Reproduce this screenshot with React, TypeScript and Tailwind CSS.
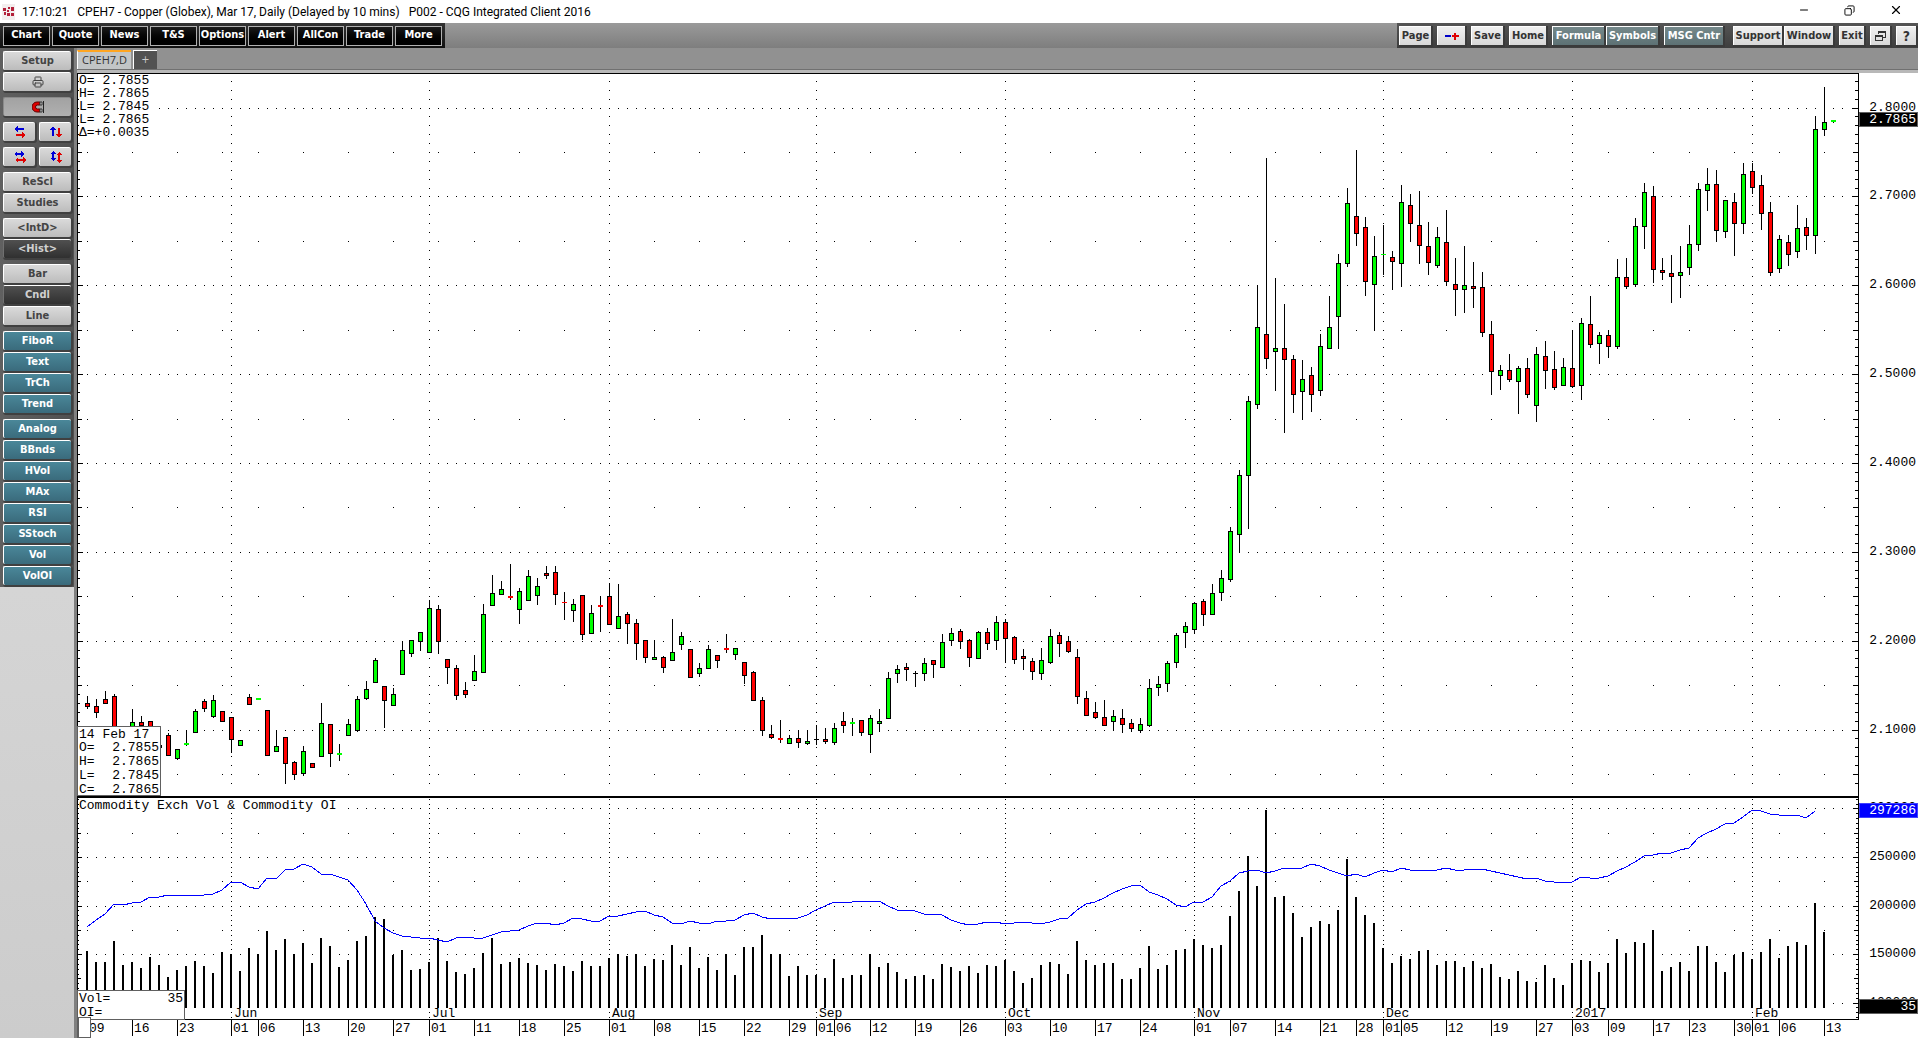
import type { ReactNode } from 'react';
import { Printer, Minus, X, Copy } from 'lucide-react';

type Kind = 'g' | 'r' | 'k';

// high, body top, body bottom, low, colour - vertical chart positions, one row per session
const CANDLES: [number, number, number, number, Kind][] = [
  [696, 703, 706, 708, 'r'], [699, 706, 712, 717, 'r'], [691, 699, 703, 703, 'r'], [694, 696, 730, 735, 'r'],
  [728, 732, 740, 745, 'r'], [709, 722, 735, 740, 'g'], [716, 722, 725, 740, 'r'], [721, 721, 735, 740, 'r'],
  [740, 745, 747, 750, 'r'], [733, 735, 755, 755, 'r'], [749, 749, 758, 759, 'g'], [730, 743, 744, 745, 'g'],
  [709, 711, 732, 732, 'g'], [699, 701, 708, 711, 'r'], [695, 700, 716, 717, 'g'], [711, 711, 721, 721, 'r'],
  [717, 717, 739, 752, 'r'], [740, 740, 745, 745, 'g'], [694, 697, 704, 704, 'r'], [698, 698, 699, 699, 'g'],
  [710, 710, 755, 755, 'r'], [730, 746, 751, 751, 'g'], [737, 737, 763, 783, 'r'], [761, 762, 774, 779, 'r'],
  [746, 751, 773, 775, 'g'], [763, 763, 767, 767, 'r'], [703, 723, 756, 756, 'g'], [724, 724, 753, 766, 'r'],
  [744, 753, 754, 760, 'g'], [719, 724, 735, 735, 'g'], [696, 699, 730, 731, 'g'], [681, 689, 698, 699, 'g'],
  [658, 660, 682, 682, 'g'], [686, 686, 700, 727, 'r'], [688, 694, 705, 705, 'g'], [641, 650, 674, 674, 'g'],
  [640, 640, 653, 656, 'g'], [632, 632, 641, 650, 'g'], [600, 608, 652, 652, 'g'], [605, 609, 641, 653, 'r'],
  [659, 659, 667, 683, 'r'], [665, 668, 695, 699, 'r'], [682, 690, 694, 697, 'r'], [655, 671, 680, 680, 'g'],
  [604, 614, 672, 672, 'g'], [575, 593, 605, 605, 'g'], [581, 589, 594, 594, 'g'], [564, 596, 597, 599, 'r'],
  [588, 591, 609, 623, 'g'], [570, 576, 600, 600, 'g'], [578, 586, 595, 604, 'g'], [566, 573, 575, 578, 'r'],
  [566, 572, 594, 604, 'r'], [592, 602, 602, 619, 'r'], [599, 604, 610, 621, 'g'], [595, 595, 634, 639, 'r'],
  [605, 613, 633, 633, 'g'], [596, 605, 606, 631, 'r'], [583, 596, 624, 624, 'r'], [584, 616, 628, 628, 'g'],
  [612, 614, 623, 643, 'r'], [619, 623, 643, 659, 'r'], [640, 640, 657, 662, 'r'], [640, 657, 659, 659, 'g'],
  [656, 657, 667, 672, 'r'], [619, 652, 660, 660, 'g'], [632, 636, 644, 649, 'g'], [649, 649, 677, 677, 'r'],
  [663, 668, 673, 676, 'g'], [645, 649, 668, 668, 'g'], [655, 655, 660, 667, 'r'], [634, 648, 649, 652, 'r'],
  [648, 648, 654, 659, 'g'], [662, 662, 675, 683, 'r'], [671, 672, 700, 700, 'r'], [697, 700, 730, 735, 'r'],
  [725, 734, 737, 738, 'r'], [720, 738, 739, 742, 'r'], [735, 738, 743, 743, 'g'], [730, 738, 742, 747, 'r'],
  [730, 741, 743, 744, 'g'], [725, 739, 739, 744, 'k'], [728, 739, 741, 743, 'r'], [723, 728, 742, 744, 'g'],
  [712, 721, 725, 732, 'r'], [718, 722, 723, 735, 'g'], [720, 720, 732, 735, 'r'], [715, 718, 734, 752, 'g'],
  [709, 721, 723, 731, 'g'], [672, 678, 718, 718, 'g'], [665, 669, 673, 682, 'g'], [663, 667, 669, 680, 'r'],
  [671, 673, 673, 686, 'k'], [658, 663, 673, 680, 'g'], [660, 660, 664, 677, 'r'], [634, 642, 667, 667, 'g'],
  [628, 633, 640, 645, 'g'], [629, 631, 641, 648, 'r'], [639, 640, 657, 666, 'r'], [631, 632, 658, 658, 'g'],
  [628, 632, 643, 649, 'r'], [616, 622, 640, 649, 'g'], [619, 622, 638, 662, 'r'], [636, 637, 659, 663, 'r'],
  [649, 656, 658, 669, 'r'], [658, 661, 671, 679, 'r'], [648, 660, 673, 679, 'g'], [629, 636, 662, 663, 'g'],
  [632, 635, 643, 656, 'r'], [636, 641, 651, 652, 'r'], [649, 657, 696, 703, 'r'], [691, 698, 715, 715, 'r'],
  [702, 712, 717, 718, 'r'], [700, 717, 725, 725, 'r'], [710, 716, 721, 730, 'g'], [709, 718, 724, 732, 'r'],
  [719, 723, 728, 731, 'r'], [718, 724, 730, 732, 'g'], [679, 688, 725, 726, 'g'], [676, 684, 687, 695, 'g'],
  [661, 663, 683, 691, 'g'], [633, 635, 662, 667, 'g'], [622, 626, 632, 647, 'g'], [602, 603, 629, 633, 'g'],
  [599, 601, 614, 625, 'r'], [584, 593, 614, 614, 'g'], [570, 578, 592, 600, 'g'], [527, 531, 579, 581, 'g'],
  [470, 475, 534, 552, 'g'], [396, 401, 475, 528, 'g'], [286, 327, 404, 408, 'g'], [158, 334, 358, 368, 'r'],
  [278, 348, 351, 390, 'g'], [304, 348, 359, 432, 'r'], [355, 359, 394, 412, 'r'], [360, 379, 391, 419, 'g'],
  [367, 375, 394, 411, 'r'], [334, 346, 390, 395, 'g'], [296, 327, 348, 348, 'g'], [254, 263, 316, 348, 'g'],
  [188, 203, 263, 266, 'g'], [150, 216, 233, 245, 'r'], [217, 227, 281, 295, 'r'], [236, 256, 284, 330, 'g'],
  [225, 254, 254, 274, 'g'], [251, 257, 261, 289, 'r'], [185, 202, 263, 286, 'g'], [194, 205, 223, 241, 'r'],
  [191, 225, 245, 263, 'r'], [222, 246, 262, 274, 'r'], [227, 237, 265, 267, 'g'], [210, 242, 281, 284, 'r'],
  [258, 284, 289, 315, 'r'], [246, 285, 289, 312, 'g'], [262, 286, 288, 307, 'r'], [272, 287, 332, 336, 'r'],
  [321, 334, 371, 394, 'r'], [365, 370, 375, 389, 'g'], [354, 370, 379, 381, 'r'], [366, 368, 381, 413, 'g'],
  [358, 368, 394, 397, 'r'], [347, 354, 405, 421, 'g'], [341, 356, 370, 388, 'r'], [351, 369, 387, 389, 'r'],
  [358, 367, 385, 385, 'g'], [330, 368, 386, 387, 'r'], [318, 323, 385, 399, 'g'], [296, 324, 344, 347, 'r'],
  [332, 335, 343, 363, 'g'], [330, 335, 346, 357, 'r'], [259, 277, 346, 348, 'g'], [258, 277, 286, 288, 'r'],
  [218, 226, 284, 286, 'g'], [183, 192, 226, 248, 'g'], [186, 196, 269, 282, 'r'], [258, 270, 272, 279, 'r'],
  [255, 273, 276, 302, 'r'], [246, 272, 275, 297, 'g'], [225, 244, 267, 274, 'g'], [183, 189, 244, 250, 'g'],
  [168, 184, 190, 210, 'g'], [170, 184, 230, 241, 'r'], [200, 200, 231, 237, 'g'], [193, 202, 223, 255, 'r'],
  [163, 174, 223, 233, 'g'], [163, 171, 187, 193, 'r'], [175, 185, 213, 229, 'r'], [202, 212, 272, 275, 'r'],
  [235, 239, 268, 272, 'g'], [235, 242, 254, 265, 'r'], [205, 228, 251, 257, 'g'], [218, 227, 235, 249, 'r'],
  [116, 129, 235, 253, 'g'], [87, 122, 129, 135, 'g'], [120, 120, 121, 122, 'g'],
];

// volume and open interest, in thirds of a unit below the top of the lower pane
const VOLUME = [
  513, 546, 546, 483, 555, 546, 564, 531, 555, 591, 570, 558, 543, 558, 579, 516, 522, 573, 504, 522, 453, 510, 477,
  522, 489, 549, 474, 498, 561, 540, 483, 468, 411, 417, 525, 510, 570, 567, 546, 474, 543, 576, 582, 564, 519, 474,
  552, 546, 534, 549, 555, 570, 552, 558, 573, 543, 558, 558, 534, 522, 528, 522, 558, 537, 540, 495, 555, 501, 564,
  531, 570, 522, 585, 501, 501, 465, 522, 522, 588, 558, 585, 585, 594, 537, 594, 585, 585, 522, 561, 549, 576, 597,
  588, 585, 597, 552, 561, 573, 558, 579, 555, 558, 540, 573, 609, 594, 555, 546, 552, 582, 483, 540, 555, 549, 549,
  597, 597, 564, 498, 567, 555, 510, 507, 477, 495, 504, 495, 408, 333, 228, 318, 90, 351, 348, 399, 471, 441, 423,
  432, 390, 237, 351, 405, 429, 504, 549, 528, 537, 513, 510, 555, 543, 543, 561, 543, 564, 552, 591, 597, 573, 603,
  606, 555, 594, 615, 549, 540, 543, 576, 549, 477, 519, 486, 489, 450, 573, 561, 546, 573, 498, 498, 546, 576, 525,
  516, 537, 516, 477, 534, 498, 486, 495, 369, 456,
];

const OPEN_INTEREST = [
  440, 421, 402, 371, 376, 370, 367, 352, 352, 346, 346, 346, 346, 346, 343, 330, 307, 307, 321, 328, 295, 298, 271,
  267, 253, 262, 283, 283, 292, 301, 330, 372, 424, 445, 459, 469, 472, 475, 475, 481, 487, 475, 471, 475, 475, 466,
  457, 454, 451, 439, 430, 430, 436, 430, 414, 418, 424, 424, 409, 409, 403, 397, 394, 406, 412, 429, 433, 424, 430,
  433, 424, 424, 421, 404, 400, 412, 418, 415, 418, 415, 406, 391, 379, 367, 367, 367, 364, 367, 364, 377, 391, 391,
  394, 403, 403, 406, 419, 428, 436, 433, 427, 427, 433, 430, 427, 430, 433, 425, 418, 415, 391, 371, 367, 355, 338,
  328, 319, 314, 337, 344, 357, 375, 382, 367, 367, 350, 318, 304, 278, 274, 271, 280, 274, 265, 268, 265, 253, 257,
  269, 280, 289, 283, 290, 278, 271, 277, 265, 271, 271, 271, 271, 265, 271, 271, 268, 268, 273, 280, 286, 292, 298,
  295, 304, 307, 307, 307, 291, 295, 295, 289, 272, 262, 245, 227, 226, 220, 220, 209, 205, 174, 160, 146, 133, 129,
  110, 91, 94, 103, 106, 109, 106, 115, 94,
];

const MONTHS: [number, string][] = [
  [16, 'Jun'], [38, 'Jul'], [58, 'Aug'], [81, 'Sep'], [102, 'Oct'], [123, 'Nov'], [144, 'Dec'], [165, '2017'], [185, 'Feb'],
];

const DAYS: [number, string][] = [
  [0, '09'], [5, '16'], [10, '23'], [16, '01'], [19, '06'], [24, '13'], [29, '20'], [34, '27'], [38, '01'], [43, '11'],
  [48, '18'], [53, '25'], [58, '01'], [63, '08'], [68, '15'], [73, '22'], [78, '29'], [81, '01'], [83, '06'], [87, '12'],
  [92, '19'], [97, '26'], [102, '03'], [107, '10'], [112, '17'], [117, '24'], [123, '01'], [127, '07'], [132, '14'],
  [137, '21'], [141, '28'], [144, '01'], [146, '05'], [151, '12'], [156, '19'], [161, '27'], [165, '03'], [169, '09'],
  [174, '17'], [178, '23'], [183, '30'], [185, '01'], [188, '06'], [193, '13'],
];

// first session of each week
const WEEKS = [
  0, 5, 10, 15, 19, 24, 29, 34, 39, 43, 48, 53, 58, 63, 68, 73, 78, 83, 87, 92, 97, 102, 107, 112, 117, 122, 127, 132,
  137, 141, 146, 151, 156, 161, 165, 169, 174, 178, 183, 188, 193,
];

const LEFT = 77;
const RIGHT = 1858;
const TOP = 73;
const SPLIT = 796;
const BOTTOM = 1019;
const PANE = 780;
const COLORS = { g: '#00ff00', r: '#ff0000', k: '#000000' };

const xAt = (i: number) => 87 + i * 9;
const priceY = (step: number) => Math.floor(81.4 + step * 8.885);
const volumeY = (step: number) => Math.round(808.4 + step * 4.856);
const range = (from: number, to: number) => Array.from({ length: to - from + 1 }, (_, i) => from + i);

// step 3 is 2.8000, every tenth step is a labelled price
const PRICE_STEPS = range(0, 79);
const VOLUME_STEPS = range(-2, 43);

const Label = ({ x, y, end, color, children }: { x: number; y: number; end?: boolean; color?: string; children: ReactNode }) => (
  <text x={x} y={y} textAnchor={end ? 'end' : 'start'} fill={color || '#000'} xmlSpace="preserve">
    {children}
  </text>
);

const Dot = ({ x, y }: { x: number; y: number }) => <rect x={x} y={y} width={1} height={1} fill="#000" />;

function Candle({ index }: { index: number }) {
  const [high, top, bottom, low, kind] = CANDLES[index];
  const x = xAt(index);
  const doji = bottom - top < 2;
  return (
    <g>
      <rect x={x} y={high} width={1} height={low - high + 1} fill="#000" />
      <rect x={x - 2} y={top} width={5} height={bottom - top + 1} fill={doji ? COLORS[kind] : '#000'} />
      {!doji && <rect x={x - 1} y={top + 1} width={3} height={bottom - top - 1} fill={COLORS[kind]} />}
    </g>
  );
}

function Ticks({ y, size }: { y: number; size: number }) {
  return (
    <g fill="#000">
      <rect x={LEFT} y={y} width={size} height={1} />
      <rect x={RIGHT - size} y={y} width={size} height={1} />
    </g>
  );
}

function Chart() {
  const sessions = range(0, 195);
  const oiPoints = OPEN_INTEREST.map((v, i) => `${xAt(i)},${Math.round(PANE + v / 3)}`).join(' ');

  return (
    <svg
      viewBox="77 73 1841 965"
      className="block w-full bg-white font-['Liberation_Mono',monospace] text-[13px]"
      shapeRendering="crispEdges"
      role="img"
      aria-label="CPEH7 daily candles with volume and open interest"
    >
      {/* grid */}
      {PRICE_STEPS.map((s) => {
        const y = priceY(s);
        const major = s % 10 === 3;
        const half = s % 10 === 8;
        return (
          <g key={s}>
            <Ticks y={y} size={major ? 6 : half ? 5 : 3} />
            {major && sessions.map((i) => <Dot key={i} x={xAt(i)} y={y} />)}
            {half && WEEKS.map((i) => <Dot key={i} x={xAt(i)} y={y} />)}
            {MONTHS.map(([i]) => <Dot key={i} x={xAt(i)} y={y} />)}
          </g>
        );
      })}
      {VOLUME_STEPS.map((s) => {
        const y = volumeY(s);
        const major = s % 10 === 0;
        const half = s % 5 === 0 && !major;
        return (
          <g key={s}>
            <Ticks y={y} size={major ? 5 : half ? 4 : 2} />
            {major && sessions.map((i) => <Dot key={i} x={xAt(i)} y={y} />)}
            {half && WEEKS.map((i) => <Dot key={i} x={xAt(i)} y={y} />)}
            {MONTHS.map(([i]) => <Dot key={i} x={xAt(i)} y={y} />)}
          </g>
        );
      })}

      {/* series */}
      {CANDLES.map((_, i) => <Candle key={i} index={i} />)}
      {VOLUME.map((v, i) => (
        <rect key={i} x={xAt(i) - 1} y={PANE + v / 3} width={2} height={228 - v / 3} fill="#000" />
      ))}
      <polyline points={oiPoints} fill="none" stroke="#0000ff" strokeWidth={1} />

      {/* frame */}
      <rect x={LEFT} y={TOP} width={1782} height={1} />
      <rect x={LEFT} y={TOP} width={1} height={946} />
      <rect x={RIGHT} y={TOP} width={1} height={946} />
      <rect x={LEFT} y={SPLIT} width={1782} height={2} />
      <rect x={LEFT} y={BOTTOM} width={1782} height={1} />

      {/* time axis */}
      {MONTHS.map(([i, name]) => (
        <g key={i}>
          <rect x={xAt(i) + 2} y={1008} width={name.length * 8} height={11} fill="#fff" />
          <Label x={xAt(i) + 3} y={1017}>{name}</Label>
        </g>
      ))}
      {DAYS.map(([i, day]) => (
        <g key={i}>
          <rect x={xAt(i) - (i === 0 ? 9 : 0)} y={BOTTOM} width={1} height={17} />
          <Label x={xAt(i) + 2} y={1032}>{day}</Label>
        </g>
      ))}

      {/* price axis */}
      {range(0, 7).map((n) => (
        <Label key={n} x={1916} y={priceY(3 + n * 10) + 3} end>{(2.8 - n / 10).toFixed(4)}</Label>
      ))}
      {[300000, 250000, 200000, 150000, 100000].map((v, n) => (
        <Label key={v} x={1916} y={volumeY(n * 10) + 3} end>{v}</Label>
      ))}
      <rect x={1859} y={112} width={59} height={15} fill="#606060" />
      <rect x={1860} y={113} width={57} height={13} fill="#000" />
      <Label x={1916} y={123} end color="#fff">2.7865</Label>
      <rect x={1859} y={803} width={59} height={15} fill="#4040ff" />
      <rect x={1860} y={804} width={57} height={13} fill="#0000ff" />
      <Label x={1916} y={814} end color="#fff">297286</Label>
      <rect x={1859} y={999} width={59} height={15} fill="#606060" />
      <rect x={1860} y={1000} width={57} height={13} fill="#000" />
      <Label x={1916} y={1010} end color="#fff">35</Label>

      {/* last quote */}
      <rect x={79} y={74} width={76} height={64} fill="#fff" />
      {['O= 2.7855', 'H= 2.7865', 'L= 2.7845', 'L= 2.7865', 'Δ=+0.0035'].map((t, n) => (
        <Label key={n} x={79} y={84 + n * 13}>{t}</Label>
      ))}
      <rect x={79} y={799} width={266} height={13} fill="#fff" />
      <Label x={79} y={809}>Commodity Exch Vol &amp; Commodity OI</Label>

      {/* cursor boxes */}
      <rect x={77} y={726} width={84} height={70} fill="#606060" />
      <rect x={78} y={727} width={82} height={68} fill="#fff" />
      <Label x={79} y={738}>14 Feb 17</Label>
      {[['O=', '2.7855'], ['H=', '2.7865'], ['L=', '2.7845'], ['C=', '2.7865']].map(([k, v], n) => (
        <g key={k}>
          <Label x={79} y={751 + n * 14}>{k}</Label>
          <Label x={159} y={751 + n * 14} end>{v}</Label>
        </g>
      ))}
      <rect x={77} y={990} width={108} height={30} fill="#606060" />
      <rect x={78} y={991} width={106} height={28} fill="#fff" />
      <Label x={79} y={1002}>Vol=</Label>
      <Label x={183} y={1002} end>35</Label>
      <Label x={79} y={1016}>OI=</Label>
      <rect x={77} y={1017} width={14} height={21} fill="#606060" />
      <rect x={79} y={1018} width={11} height={19} fill="#fff" />
    </svg>
  );
}

const ArrowsIcon = ({ vertical, double }: { vertical?: boolean; double?: boolean }) => (
  <svg width="12" height="12" viewBox="0 0 12 12" shapeRendering="crispEdges">
    <g transform={vertical ? 'matrix(0 1 1 0 0 0)' : undefined}>
      <path d={double ? 'M0 3l3-3v2h4V0l3 3-3 3V4H3v2z' : 'M0 3l4-3v2h6v2H4v2z'} fill="#0000d8" />
      <path d={double ? 'M1 9l3-3v2h5V6l3 3-3 3v-2H4v2z' : 'M12 9L8 6v2H2v2h6v2z'} fill="#e00000" />
    </g>
  </svg>
);

const MagnetIcon = () => (
  <svg width="12" height="12" viewBox="0 0 12 12">
    <path d="M8 1H5a5 5 0 0 0 0 10h3V8H5.500a2 2 0 0 1 0-4H8z" fill="#e00000" stroke="#600000" />
    <path d="M8 1h2v3H8zM8 8h2v3H8z" fill="#ddd" stroke="#333" />
    <path d="M11.500 0v12" stroke="#222" />
  </svg>
);

const PlusMinusIcon = () => (
  <svg width="14" height="7" viewBox="0 0 14 7" shapeRendering="crispEdges">
    <path d="M0 2h6v2H0z" fill="#0000c8" />
    <path d="M7 2h2V0h2v2h3v2h-3v3H9V4H7z" fill="#e00000" />
  </svg>
);

const CascadeIcon = () => (
  <svg width="11" height="11" viewBox="0 0 11 11" shapeRendering="crispEdges" fill="none" stroke="#333" strokeWidth="1">
    <path d="M3.500 3V.5h7v6H8M3 1.500h8M.5 4.500h7v5h-7zM0 5.500h8" />
  </svg>
);

const LogoIcon = () => (
  <svg width="13" height="16" viewBox="0 0 13 16" shapeRendering="crispEdges">
    <rect width="13" height="16" fill="#f3eeee" />
    <path d="M1 4h3v3H1zM5 6h2v2H5zM9 3h3v4H9zM2 8h2v3H2zM5 9h3v3H5zM9 9h3v3H9zM6 3h2v2H6z" fill="#b3203a" />
  </svg>
);

const faces = {
  light: 'border-white bg-linear-to-b from-[#dadada] to-[#bcbcbc] text-[#444444]',
  dark: 'border-[#707070] border-t-white bg-linear-to-b from-[#505050] to-[#303030] text-[#d0d0d0]',
  teal: 'border-white bg-linear-to-b from-[#4a8799] to-[#3a6b7c] text-white',
  pressed: 'border-[#8a8a8a] bg-linear-to-b from-[#a2a2a2] to-[#b0b0b0] text-[#444444]',
};

function SideButton({ face = 'light', label, children }: { face?: keyof typeof faces; label?: string; children: ReactNode }) {
  return (
    <button
      aria-label={label}
      className={`flex h-[19px] min-w-0 flex-1 items-center justify-center rounded-xs border-t border-l shadow-[1px_1px_0_1px_#404040] ${faces[face]}`}
    >
      {children}
    </button>
  );
}

const SIDE_GROUPS: { face: 'light' | 'teal'; active?: string; items: string[] }[] = [
  { face: 'light', items: ['ReScl', 'Studies'] },
  { face: 'light', active: '<Hist>', items: ['<IntD>', '<Hist>'] },
  { face: 'light', active: 'Cndl', items: ['Bar', 'Cndl', 'Line'] },
  { face: 'teal', items: ['FiboR', 'Text', 'TrCh', 'Trend'] },
  { face: 'teal', items: ['Analog', 'BBnds', 'HVol', 'MAx', 'RSI', 'SStoch', 'Vol', 'VolOI'] },
];

function Sidebar() {
  return (
    <aside className="flex w-[74px] shrink-0 flex-col bg-linear-to-b from-[#e0e0e0] to-[#cccccc]">
      <div className="flex flex-col gap-[6px] bg-linear-to-r from-[#606060] to-[#505050] pt-[3px] pr-[3px] pb-[2px] pl-[3px] text-[11px] font-bold">
        <div className="flex flex-col gap-[2px]">
          <div className="flex"><SideButton>Setup</SideButton></div>
          <div className="flex"><SideButton label="Print"><Printer size={12} strokeWidth={2} /></SideButton></div>
        </div>
        <div className="flex"><SideButton face="pressed" label="Snap"><MagnetIcon /></SideButton></div>
        <div className="flex gap-[4px]">
          <SideButton label="Scroll time"><ArrowsIcon /></SideButton>
          <SideButton label="Scroll price"><ArrowsIcon vertical /></SideButton>
        </div>
        <div className="flex gap-[4px]">
          <SideButton label="Scale time"><ArrowsIcon double /></SideButton>
          <SideButton label="Scale price"><ArrowsIcon vertical double /></SideButton>
        </div>
        {SIDE_GROUPS.map((group) => (
          <div key={group.items[0]} className="flex flex-col gap-[2px]">
            {group.items.map((item) => (
              <div key={item} className="flex">
                <SideButton face={item === group.active ? 'dark' : group.face}>{item}</SideButton>
              </div>
            ))}
          </div>
        ))}
      </div>
    </aside>
  );
}

const MENU = ['Chart', 'Quote', 'News', 'T&S', 'Options', 'Alert', 'AllCon', 'Trade', 'More'];

function ToolButton({ width, teal, label, children }: { width: string; teal?: boolean; label?: string; children: ReactNode }) {
  return (
    <button
      aria-label={label}
      className={`flex h-[19px] items-center justify-center border-t border-l border-white whitespace-nowrap shadow-[1px_1px_0_1px_#3a3a3a] ${width} ${
        teal ? 'bg-linear-to-b from-[#75898b] to-[#5d7174] text-white' : 'bg-linear-to-b from-[#f0f0f0] to-[#d8d8d8] text-[#333333]'
      }`}
    >
      {children}
    </button>
  );
}

function App() {
  return (
    <div className="flex min-h-screen flex-col bg-white font-['DejaVu_Sans_Condensed','DejaVu_Sans',sans-serif] text-[11px] text-black">
      <header className="flex h-[23px] items-center pl-[2px] font-['Roboto',sans-serif] text-[12px]">
        <LogoIcon />
        <h1 className="ml-[7px] flex gap-[9px] whitespace-nowrap">
          <span>17:10:21</span>
          <span>CPEH7 - Copper (Globex), Mar 17, Daily (Delayed by 10 mins)</span>
          <span>P002 - CQG Integrated Client 2016</span>
        </h1>
        <div className="ml-auto flex h-[20px] items-center gap-[34px] self-start pr-[15px]">
          <button aria-label="Minimize"><Minus size={12} strokeWidth={2} /></button>
          <button aria-label="Restore"><Copy size={11} strokeWidth={2} className="-scale-x-100" /></button>
          <button aria-label="Close"><X size={14} strokeWidth={2} /></button>
        </div>
      </header>

      <nav className="flex h-[25px] justify-between bg-linear-to-b from-[#9a9a9a] to-[#7e7e7e] font-bold">
        <div className="flex items-center gap-[2px] bg-linear-to-b from-[#333333] to-[#111111] pr-[3px] pl-[3px]">
          {MENU.map((item) => (
            <button key={item} className="h-[20px] w-[47px] border border-[#b0b0b0] bg-linear-to-b from-[#1c1c1c] to-black text-white">
              {item}
            </button>
          ))}
        </div>
        <div className="flex items-center bg-linear-to-b from-[#555555] to-[#3e3e3e] pr-[2px] pl-[2px]">
          <ToolButton width="w-[32px]">Page</ToolButton>
          <div className="w-[6px]" />
          <ToolButton width="w-[28px]" label="Zoom"><PlusMinusIcon /></ToolButton>
          <div className="w-[6px]" />
          <ToolButton width="w-[32px]">Save</ToolButton>
          <div className="w-[6px]" />
          <ToolButton width="w-[37px]">Home</ToolButton>
          <div className="w-[6px]" />
          <ToolButton width="w-[52px]" teal>Formula</ToolButton>
          <div className="w-[2px]" />
          <ToolButton width="w-[52px]" teal>Symbols</ToolButton>
          <div className="w-[6px]" />
          <ToolButton width="w-[59px]" teal>MSG Cntr</ToolButton>
          <div className="w-[10px]" />
          <ToolButton width="w-[49px]">Support</ToolButton>
          <div className="w-[2px]" />
          <ToolButton width="w-[49px]">Window</ToolButton>
          <div className="w-[6px]" />
          <ToolButton width="w-[25px]">Exit</ToolButton>
          <div className="w-[6px]" />
          <ToolButton width="w-[20px]" label="Cascade"><CascadeIcon /></ToolButton>
          <div className="w-[6px]" />
          <ToolButton width="w-[20px]"><span className="text-[14px]">?</span></ToolButton>
        </div>
      </nav>

      <div className="flex grow">
        <Sidebar />
        <main className="min-w-0 grow border-l-[3px] border-[#808080] bg-white">
          <div className="flex h-[25px] items-end gap-[2px] border-b-3 border-[#b8b8b8] bg-[#919191] pb-px shadow-[inset_0_-1px_0_#707070]">
            <button className="h-[19px] w-[54px] border-t-2 border-l border-l-white border-t-[#ffa520] bg-[#c2c5c6] font-['Open_Sans',sans-serif] text-[#333333]">
              CPEH7,D
            </button>
            <button className="h-[19px] w-[24px] border-t border-l border-white bg-[#525252] text-[#cccccc]">+</button>
          </div>
          <Chart />
        </main>
      </div>
    </div>
  );
}

export default App;
